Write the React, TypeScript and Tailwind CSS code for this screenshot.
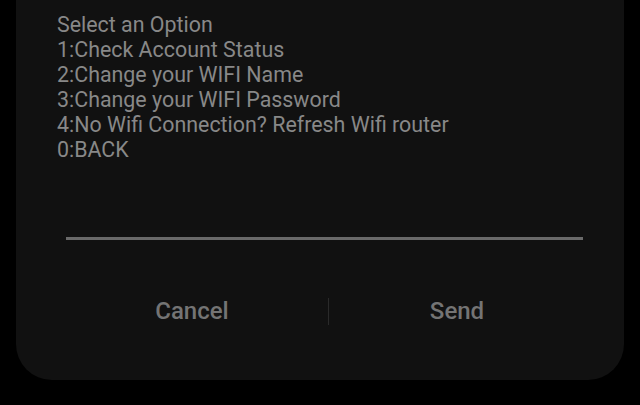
import React from 'react';

const options = [
  "Select an Option",
  "1:Check Account Status",
  "2:Change your WIFI Name",
  "3:Change your WIFI Password",
  "4:No Wifi Connection? Refresh Wifi router",
  "0:BACK",
];

export default function App() {
  return (
    <div className="h-[405px] w-[640px] bg-black px-4 pb-[25px] font-['Roboto',sans-serif]">
      <div className="flex h-full flex-col rounded-b-[36px] bg-[#111111]">
        {/* message */}
        <div className="pl-[41px] pt-[12px] text-[21.4px] leading-[25px] text-[#888888]">
          {options.map((o) => (
            <div key={o}>{o}</div>
          ))}
        </div>

        {/* input underline */}
        <div className="ml-[50px] mr-[41px] mt-[75px] h-[3px] bg-[#6a6a6a]" />

        {/* actions */}
        <div className="ml-[40px] mt-[53px] flex items-center">
          <button className="w-[272px] text-center text-[24px] font-medium text-[#747474]">Cancel</button>
          <div className="h-[27px] w-px bg-[#2a2a2a]" />
          <button className="w-[256px] text-center text-[24px] font-medium text-[#747474]">Send</button>
        </div>
      </div>
    </div>
  );
}
